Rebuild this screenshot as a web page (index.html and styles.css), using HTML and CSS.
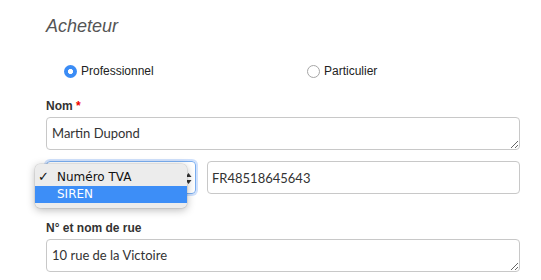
FILE: index.html
```html
<!DOCTYPE html>
<html lang="fr">
<head>
    <meta charset="UTF-8">
    <meta name="viewport" content="width=device-width, initial-scale=1.0">
    <title>Acheteur</title>
    <link rel="stylesheet" href="styles.css">
</head>
<body>
    <div class="form">
        <h2 class="section-title">Acheteur</h2>

        <!-- Type d'acheteur -->
        <div class="radio-row">
            <label class="radio">
                <span class="radio-dot checked"></span>
                Professionnel
            </label>
            <label class="radio">
                <span class="radio-dot"></span>
                Particulier
            </label>
        </div>

        <div class="form-group">
            <label class="field-label" for="nom">Nom <span class="required">*</span></label>
            <textarea id="nom" rows="1">Martin Dupond</textarea>
        </div>

        <!-- Identifiant entreprise (menu ouvert) -->
        <div class="id-row">
            <div class="select focused">
                <svg class="select-arrows" width="7" height="13" viewBox="0 0 7 13">
                    <path d="M0.5 5 L3.5 1 L6.5 5 Z" fill="#333"/>
                    <path d="M0.5 8 L3.5 12 L6.5 8 Z" fill="#333"/>
                </svg>
            </div>
            <input type="text" class="text-input" value="FR48518645643">

            <div class="dropdown">
                <div class="dropdown-item"><span class="check">✓</span>Numéro TVA</div>
                <div class="dropdown-item active">SIREN</div>
            </div>
        </div>
        <div class="field-error">Requis</div>

        <div class="form-group street">
            <label class="field-label" for="rue">N° et nom de rue</label>
            <textarea id="rue" rows="1">10 rue de la Victoire</textarea>
        </div>
    </div>
</body>
</html>
```

FILE: styles.css
```css
* {
    box-sizing: border-box;
}

body {
    margin: 0;
    font-family: "Liberation Sans", Arial, sans-serif;
    color: #222;
    background: #fff;
}

.form {
    width: 520px;
    padding-left: 46px;
}

.section-title {
    margin: 0;
    padding-top: 16px;
    font-size: 18px;
    line-height: 20px;
    font-style: italic;
    font-weight: normal;
    color: #555;
}

.radio-row {
    display: grid;
    grid-template-columns: 243px 243px;
    margin-top: 27px;
    padding-left: 18px;
    font-size: 12px;
    line-height: 16px;
}

.radio {
    display: flex;
    align-items: center;
    gap: 4px;
}

.radio-dot {
    width: 13px;
    height: 13px;
    border-radius: 50%;
    border: 1px solid #a6a6a6;
    background: #fff;
}

.radio-dot.checked {
    border: none;
    background: radial-gradient(circle, #fff 0, #fff 2.2px, #3b8cf5 2.9px);
}

.form-group {
    margin-top: 20px;
}

.field-label {
    display: block;
    margin-bottom: 4px;
    font-size: 12px;
    line-height: 14px;
    font-weight: bold;
    color: #333;
}

.required {
    color: #e00;
}

textarea, .text-input {
    display: block;
    width: 474px;
    height: 33px;
    margin: 0;
    padding: 6px 5px;
    font-family: Lato, "Open Sans", sans-serif;
    font-size: 13px;
    line-height: 18px;
    color: #333;
    border: 1px solid #c8c8c8;
    border-radius: 4px;
    outline: none;
}

.id-row {
    position: relative;
    display: flex;
    gap: 11px;
    margin-top: 11px;
}

.text-input {
    width: 313px;
    padding: 0 4px;
}

.select {
    position: relative;
    width: 150px;
    height: 33px;
    border: 1px solid #c8c8c8;
    border-radius: 4px;
}

.select.focused {
    border-color: #7aaef0;
    box-shadow: 0 0 0 2px rgba(120, 170, 245, 0.35);
}

.select-arrows {
    position: absolute;
    right: 3px;
    top: 10px;
}

.dropdown {
    position: absolute;
    left: -11px;
    top: 3px;
    width: 152px;
    padding: 4px 0 5px;
    background: #ececec;
    border-radius: 5px;
    box-shadow: 0 2px 8px rgba(0, 0, 0, 0.28), 0 0 0 0.5px rgba(0, 0, 0, 0.12);
    font-family: "DejaVu Sans", sans-serif;
    font-size: 12px;
    color: #111;
    z-index: 2;
}

.dropdown-item {
    position: relative;
    height: 18px;
    line-height: 18px;
    padding-left: 22px;
}

.dropdown-item.active {
    height: 17px;
    line-height: 17px;
    background: #3d8ef7;
    color: #fff;
}

.check {
    position: absolute;
    left: 3px;
    top: 0;
    font-size: 13px;
    font-weight: bold;
}

.field-error {
    margin-top: 1px;
    height: 14px;
    font-size: 11px;
    line-height: 14px;
    color: #d00;
}

.street {
    margin-top: 12px;
}
```
